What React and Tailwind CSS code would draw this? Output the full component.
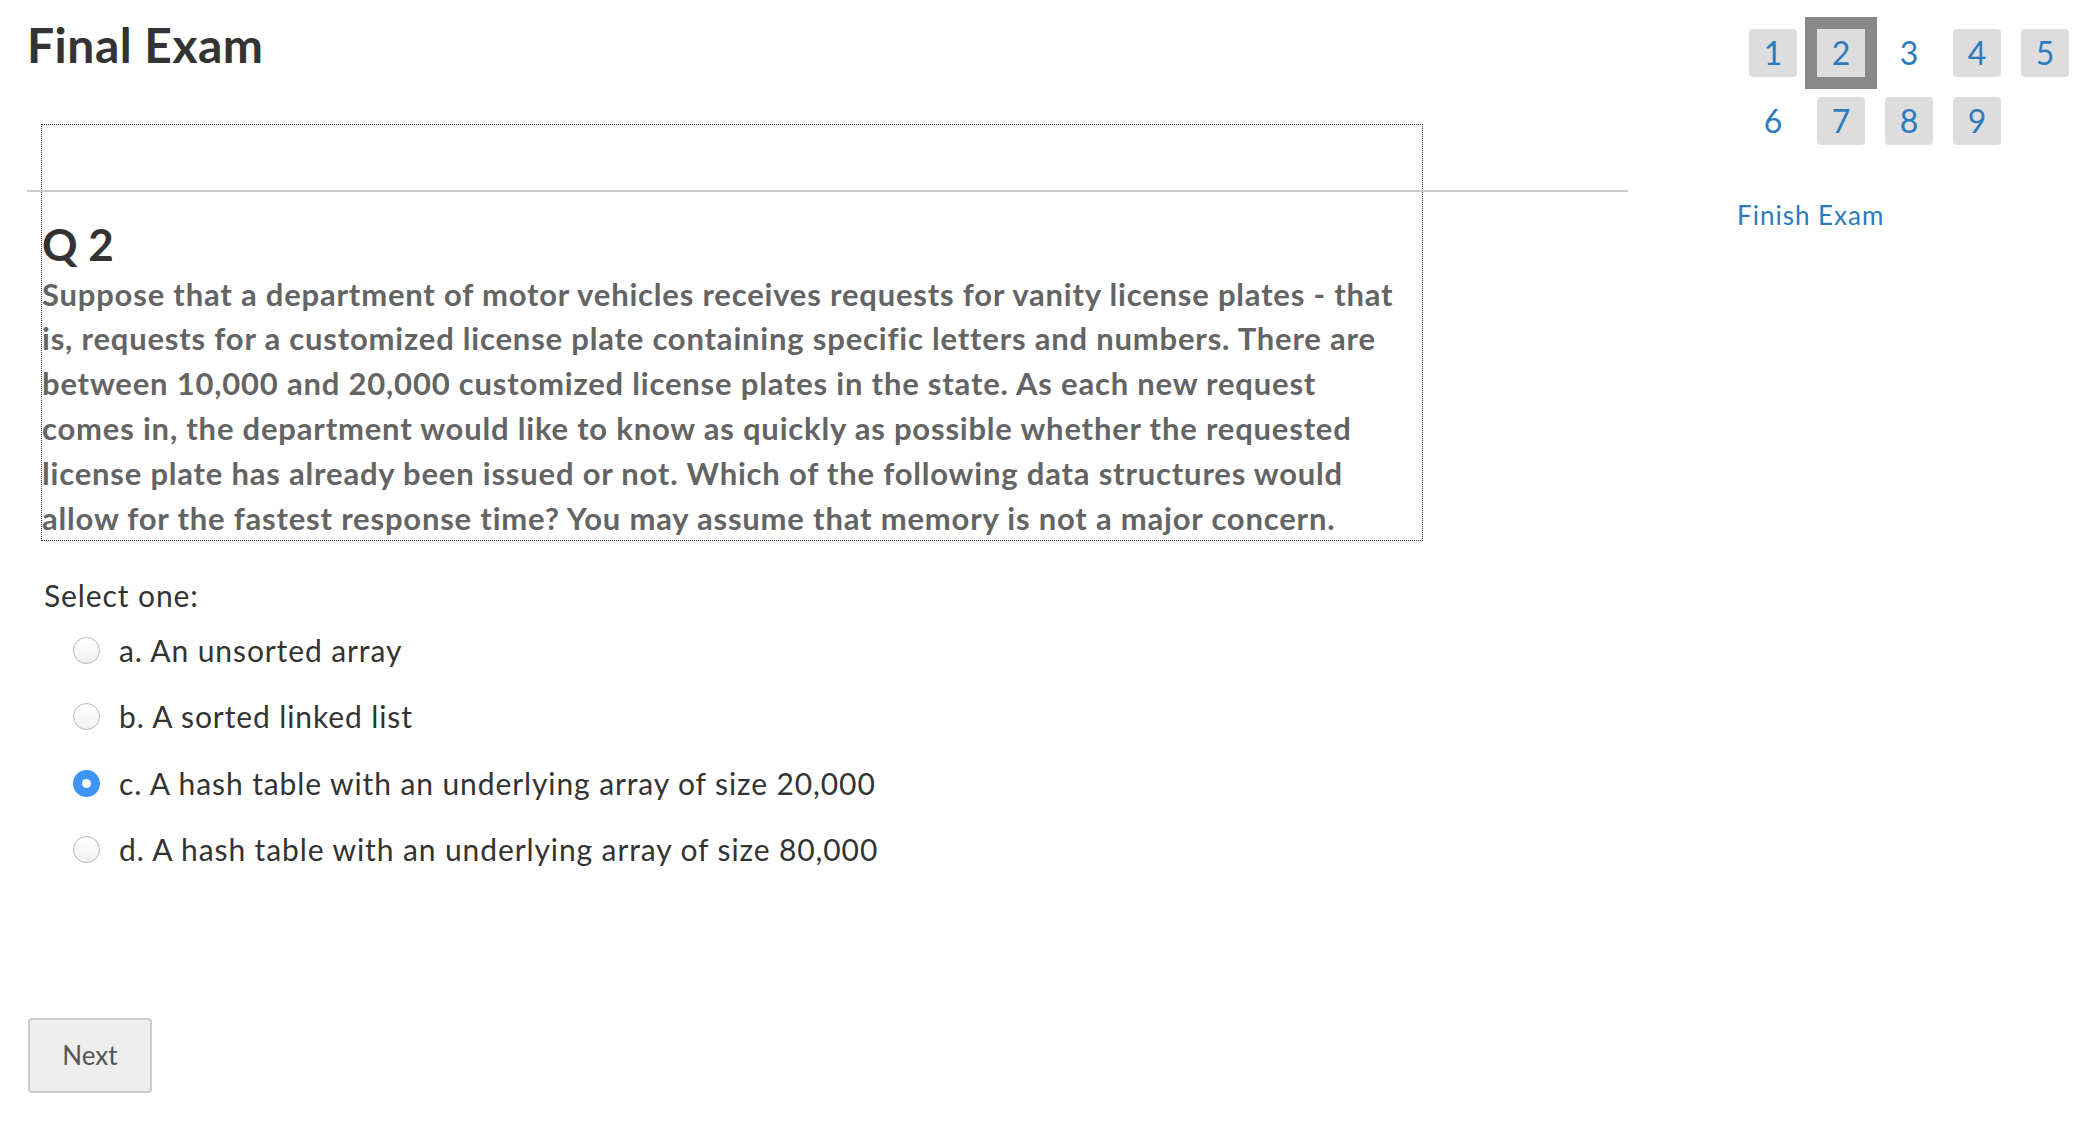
import React, { useState } from 'react';

const questionLines = [
  'Suppose that a department of motor vehicles receives requests for vanity license plates - that',
  'is, requests for a customized license plate containing specific letters and numbers. There are',
  'between 10,000 and 20,000 customized license plates in the state. As each new request',
  'comes in, the department would like to know as quickly as possible whether the requested',
  'license plate has already been issued or not. Which of the following data structures would',
  'allow for the fastest response time? You may assume that memory is not a major concern.',
];

const options = [
  { id: 'a', label: 'a. An unsorted array' },
  { id: 'b', label: 'b. A sorted linked list' },
  { id: 'c', label: 'c. A hash table with an underlying array of size 20,000' },
  { id: 'd', label: 'd. A hash table with an underlying array of size 80,000' },
];

// which nav boxes have the grey fill (answered)
const navItems = [
  { n: 1, filled: true },
  { n: 2, filled: true, current: true },
  { n: 3, filled: false },
  { n: 4, filled: true },
  { n: 5, filled: true },
  { n: 6, filled: false },
  { n: 7, filled: true },
  { n: 8, filled: true },
  { n: 9, filled: true },
];

const Radio = ({ checked }) =>
  checked ? (
    <span className="w-[27px] h-[27px] rounded-full bg-[#3d95f5] flex items-center justify-center shrink-0">
      <span className="w-[9px] h-[9px] rounded-full bg-white" />
    </span>
  ) : (
    <span className="w-[27px] h-[27px] rounded-full border border-[#b5b5b5] bg-gradient-to-b from-white to-[#f1f1f1] shrink-0" />
  );

const App = () => {
  const [selected, setSelected] = useState('c');

  return (
    <div className="min-h-screen bg-white flex justify-between font-['Lato',sans-serif]">
      {/* Main column */}
      <main className="ml-[27px] w-[1601px] flex-none">
        <h1 className="pt-[16px] text-[48px] leading-[1.2] tracking-[0.5px] font-bold text-[#333333]">Final Exam</h1>

        {/* Question box */}
        <div className="mt-[50px] ml-[14px] w-[1382px] border border-dotted border-[#333333]">
          <div className="h-[65px]" />
          <div className="-ml-[15px] w-[1601px] h-[2px] bg-[#cccccc]" />
          <h2 className="mt-[30px] text-[44px] leading-none font-bold text-[#333333]">Q 2</h2>
          <p className="mt-[6px] text-[31px] leading-[44.8px] tracking-[0.8px] font-bold text-[#646464]">
            {questionLines.map((line) => (
              <span key={line} className="block whitespace-nowrap">{line}</span>
            ))}
          </p>
        </div>

        {/* Answers */}
        <div className="mt-[36px] ml-[17px]">
          <p className="text-[30px] leading-[1.2] tracking-[0.9px] text-[#333333]">Select one:</p>
          <div className="mt-[3.5px] flex flex-col">
            {options.map((opt) => (
              <label
                key={opt.id}
                onClick={() => setSelected(opt.id)}
                className="h-[66.6px] flex items-center gap-[19px] pl-[29px] cursor-pointer"
              >
                <Radio checked={selected === opt.id} />
                <span className="text-[30px] tracking-[0.9px] text-[#333333]">{opt.label}</span>
              </label>
            ))}
          </div>
        </div>

        <button className="mt-[135px] ml-[1px] w-[124px] h-[75px] bg-[#eeeeee] border-2 border-[#cccccc] rounded-[4px] text-[26px] text-[#555555]">
          Next
        </button>
      </main>

      {/* Quiz navigation */}
      <aside className="w-[339px] flex-none pt-[29px]">
        <div className="ml-[12px] grid grid-cols-[repeat(5,48px)] auto-rows-[48px] gap-[20px]">
          {navItems.map((item) => (
            <div
              key={item.n}
              className={`flex items-center justify-center text-[32px] text-[#2b7bbd] ${
                item.filled ? 'bg-[#dddddd]' : ''
              } ${item.current ? 'outline-[12px] outline-solid outline-[#888888]' : 'rounded-[4px]'}`}
            >
              {item.n}
            </div>
          ))}
        </div>
        <a href="#" className="block mt-[55px] text-[26px] leading-[1.2] tracking-[1px] text-[#2b7bbd]">
          Finish Exam
        </a>
      </aside>
    </div>
  );
};

export default App;
